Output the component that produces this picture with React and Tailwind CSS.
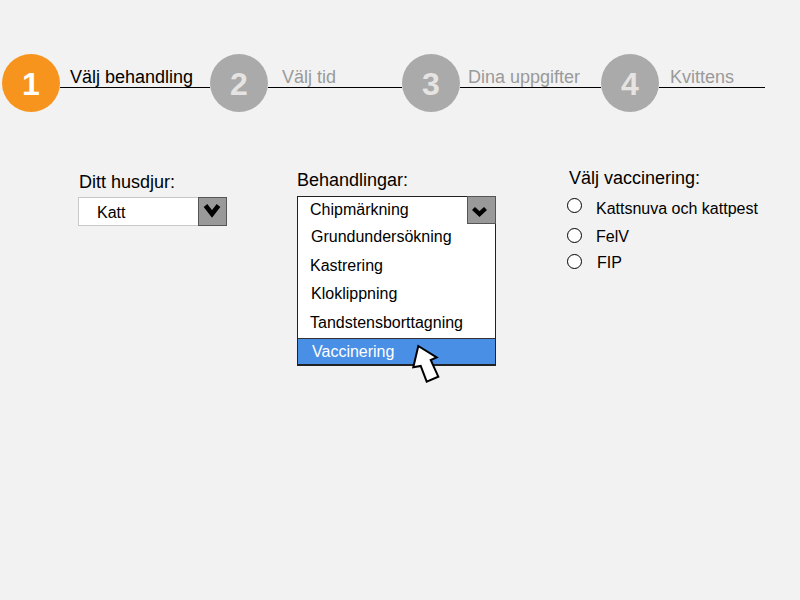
import React from "react";

const font = { fontFamily: '"Liberation Sans", Arial, sans-serif' };

function Circle({ n, active }) {
  return (
    <div
      className={
        "w-[58px] h-[58px] shrink-0 rounded-full flex items-center justify-center text-[32px] font-bold leading-none pt-[2px] " +
        (active ? "bg-[#f7941d] text-white" : "bg-[#aaaaaa] text-[#e6e4e2]")
      }
    >
      {n}
    </div>
  );
}

function Segment({ label, active, w, pl }) {
  return (
    <div
      className={
        "h-[34px] shrink-0 border-b border-black pt-[13px] text-[18px] leading-[20px] whitespace-nowrap " +
        w +
        " " +
        pl +
        " " +
        (active ? "text-black" : "text-[#9a9a9a]")
      }
    >
      {label}
    </div>
  );
}

function Radio() {
  return <div className="w-[15px] h-[15px] shrink-0 rounded-full border-[1.5px] border-black bg-white" />;
}

export default function App() {
  return (
    <div className="relative w-[800px] h-[600px] bg-[#f2f2f2] overflow-hidden text-black" style={font}>
      {/* Steps */}
      <div className="flex items-start pt-[54px] pl-[2px]">
        <Circle n="1" active />
        <Segment label="Välj behandling" active w="w-[150px]" pl="pl-[10px]" />
        <Circle n="2" />
        <Segment label="Välj tid" w="w-[134px]" pl="pl-[14px]" />
        <Circle n="3" />
        <Segment label="Dina uppgifter" w="w-[141px]" pl="pl-[8px]" />
        <Circle n="4" />
        <Segment label="Kvittens" w="w-[106px]" pl="pl-[11px]" />
      </div>

      {/* Content */}
      <div className="flex items-start mt-[48px] pl-[78px]">
        {/* Husdjur */}
        <div className="w-[149px] shrink-0 pt-[11px]">
          <div className="text-[18px] leading-[22px] pl-[1px]">Ditt husdjur:</div>
          <div className="mt-[4px] flex h-[29px]">
            <div className="flex-1 h-[29px] bg-white border-t border-l border-b border-[#c8c8c8] pl-[18px] pt-[1px] text-[16px] leading-[27px]">
              Katt
            </div>
            <div className="w-[29px] h-[29px] border border-[#555] bg-[#999]">
              <svg width="27" height="27" viewBox="0 0 27 27">
                <polyline points="6.5,7.5 13,16 19.5,7.5" fill="none" stroke="#000" strokeWidth="4.6" strokeLinejoin="miter" strokeMiterlimit="4" />
              </svg>
            </div>
          </div>
        </div>

        {/* Behandlingar */}
        <div className="w-[199px] shrink-0 ml-[70px] pt-[9px]">
          <div className="text-[18px] leading-[22px]">Behandlingar:</div>
          <div className="relative mt-[5px] bg-white border border-[#222] border-b-2 text-[16px]">
            <div className="h-[26px] leading-[26px] pl-[12px]">Chipmärkning</div>
            <div className="h-[28px] leading-[28px] pl-[13px]">Grundundersökning</div>
            <div className="h-[29px] leading-[29px] pl-[12px]">Kastrering</div>
            <div className="h-[28px] leading-[28px] pl-[13px]">Kloklippning</div>
            <div className="h-[30px] leading-[30px] pl-[12px]">Tandstensborttagning</div>
            <div className="h-[26px] border-t border-[#333] bg-[#4a8fe6] text-white leading-[25px] pl-[14px]">
              Vaccinering
            </div>
            <div className="absolute -top-px -right-px w-[29px] h-[28px] border border-[#555] bg-[#999]">
              <svg className="absolute -top-px -left-px" width="29" height="28" viewBox="0 0 29 28">
                <polyline points="6.5,12.5 12.5,18 18.5,12.5" fill="none" stroke="#000" strokeWidth="4.4" strokeLinejoin="miter" strokeMiterlimit="4" />
              </svg>
            </div>
          </div>
        </div>

        {/* Vaccinering */}
        <div className="shrink-0 ml-[71px] pt-[7px] text-[16px]">
          <div className="text-[18px] leading-[22px] pl-[2px]">Välj vaccinering:</div>
          <div className="mt-[9px] flex items-start">
            <Radio />
            <div className="ml-[14px] mt-[1px] leading-[20px]">Kattsnuva och kattpest</div>
          </div>
          <div className="mt-[8px] flex items-start">
            <div className="mt-[1px]">
              <Radio />
            </div>
            <div className="ml-[14px] leading-[20px]">FelV</div>
          </div>
          <div className="mt-[6px] flex items-start">
            <div className="mt-[1px]">
              <Radio />
            </div>
            <div className="ml-[15px] leading-[20px]">FIP</div>
          </div>
        </div>
      </div>

      {/* Cursor */}
      <svg className="absolute left-[410px] top-[342px]" width="36" height="46" viewBox="0 0 36 46">
        <polygon
          points="8.3,4 26.7,15.3 20.7,18 28.3,34.7 16.7,39.7 10.7,24 3.3,25.3"
          fill="#fff"
          stroke="#000"
          strokeWidth="2"
          strokeLinejoin="miter"
        />
      </svg>
    </div>
  );
}
